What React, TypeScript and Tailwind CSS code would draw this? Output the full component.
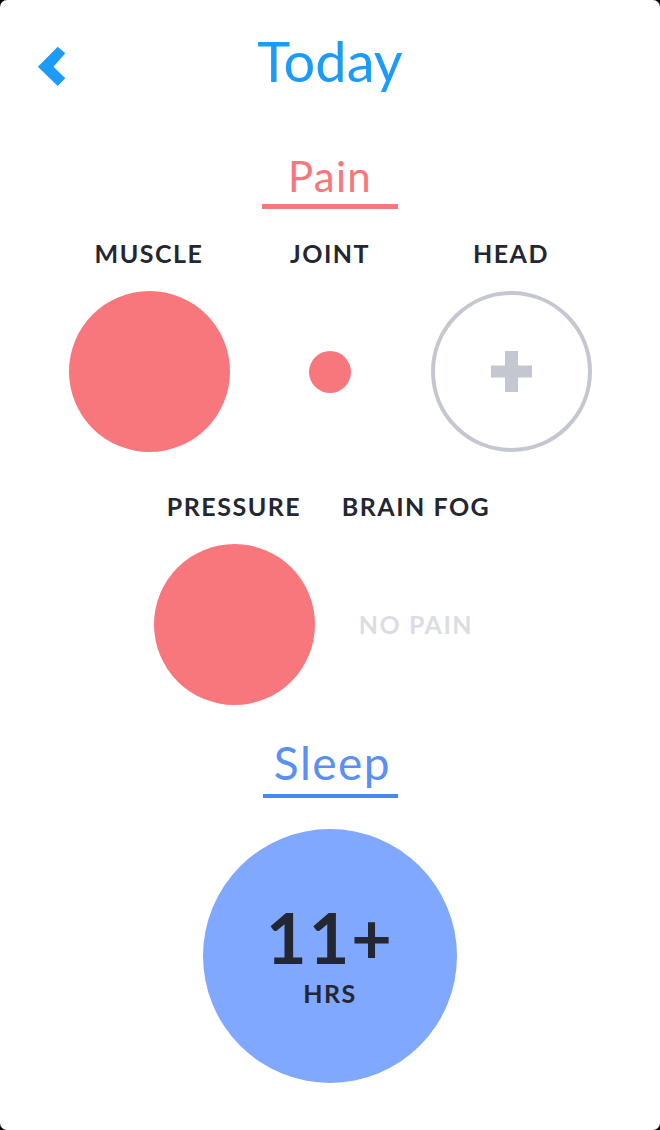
import * as React from "react";

type Reading = {
  label: string;
  size: number; // diameter of the dot, 0 = no pain, -1 = not logged
};

const topRow: Reading[] = [
  { label: "MUSCLE", size: 161 },
  { label: "JOINT", size: 42 },
  { label: "HEAD", size: -1 },
];

const bottomRow: Reading[] = [
  { label: "PRESSURE", size: 161 },
  { label: "BRAIN FOG", size: 0 },
];

function BackChevron() {
  return (
    <svg width="30" height="42" viewBox="0 0 30 42" aria-hidden="true">
      <polygon
        points="21.7,1.7 29.3,8.3 17.5,21.7 29.3,33.3 21.7,41 1.9,21.7"
        fill="#1d9bfb"
      />
    </svg>
  );
}

function AddButton() {
  return (
    <div className="w-[161px] h-[161px] rounded-full border-[4px] border-[#c5c7d0] flex items-center justify-center">
      <svg width="41" height="41" viewBox="0 0 41 41" aria-hidden="true">
        <rect x="14" y="0" width="13" height="41" fill="#c5c7d0" />
        <rect x="0" y="14.5" width="41" height="12" fill="#c5c7d0" />
      </svg>
    </div>
  );
}

function PainCell({ reading }: { reading: Reading }) {
  return (
    <div className="flex flex-col items-center">
      <span className="text-[25px] leading-none font-bold tracking-[1.5px] text-[#242632]">
        {reading.label}
      </span>
      <div className="mt-[25px] h-[161px] w-full flex items-center justify-center">
        {reading.size === -1 && <AddButton />}
        {reading.size === 0 && (
          <span className="text-[25px] leading-none font-bold tracking-[1.5px] text-[#dcdde3]">
            NO PAIN
          </span>
        )}
        {reading.size > 0 && (
          <div
            className="rounded-full bg-[#f7777c]"
            style={{ width: reading.size, height: reading.size }}
          />
        )}
      </div>
    </div>
  );
}

function SectionTitle({
  title,
  textClass,
  barClass,
}: {
  title: string;
  textClass: string;
  barClass: string;
}) {
  return (
    <div className="flex flex-col items-center">
      <h2 className={textClass}>{title}</h2>
      <div className={barClass} />
    </div>
  );
}

export default function App() {
  return (
    <div
      className="w-[660px] h-[1130px] bg-black"
      style={{ fontFamily: "Lato, 'Noto Sans', sans-serif" }}
    >
      <div className="h-full bg-white rounded-[7px] overflow-hidden">
        {/* Header */}
        <header className="pt-[33px] grid grid-cols-[1fr_auto_1fr]">
          <button className="mt-[12px] pl-[36px] justify-self-start self-start">
            <BackChevron />
          </button>
          <h1 className="text-[56px] leading-none text-[#1d9bfb]">Today</h1>
          <div />
        </header>

        {/* Pain */}
        <div className="mt-[66px]">
          <SectionTitle
            title="Pain"
            textClass="text-[42px] leading-none tracking-[1.3px] text-[#f7777c]"
            barClass="mt-[7px] w-[136px] h-[5px] bg-[#f7777c]"
          />
        </div>

        <div className="mt-[32px] grid grid-cols-[181px_181px_181px] justify-center">
          {topRow.map((r) => (
            <PainCell key={r.label} reading={r} />
          ))}
        </div>

        <div className="mt-[42px] pl-[143px] grid grid-cols-[182px_182px]">
          {bottomRow.map((r) => (
            <PainCell key={r.label} reading={r} />
          ))}
        </div>

        {/* Sleep */}
        <div className="mt-[35px]">
          <SectionTitle
            title="Sleep"
            textClass="pl-[5px] text-[46px] leading-none tracking-[1.5px] text-[#5a8ff5]"
            barClass="mt-[8px] w-[135px] h-[4px] bg-[#4a86f0]"
          />
        </div>

        <div className="mt-[31px] flex justify-center">
          <div className="w-[254px] h-[254px] pb-[5px] rounded-full bg-[#80a8fe] flex flex-col items-center justify-center text-[#242632]">
            <span className="text-[70px] leading-none font-bold tracking-[2px]">11+</span>
            <span className="mt-[9px] text-[25px] leading-none font-bold tracking-[1.5px]">
              HRS
            </span>
          </div>
        </div>
      </div>
    </div>
  );
}
